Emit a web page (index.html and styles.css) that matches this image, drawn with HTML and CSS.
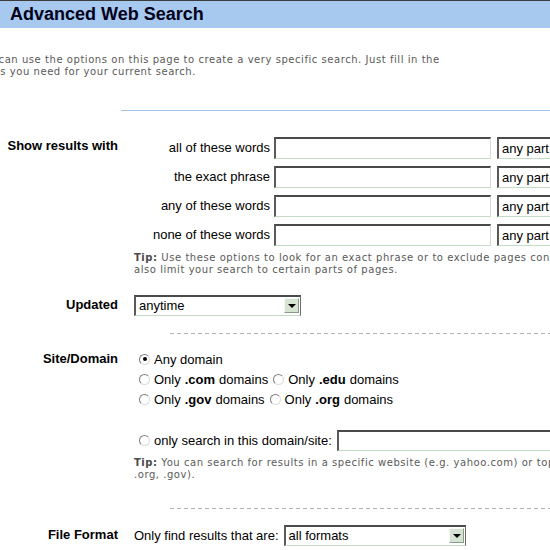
FILE: index.html
```html
<!DOCTYPE html>
<html>
<head>
<meta charset="utf-8">
<title>Advanced Web Search</title>
<link rel="stylesheet" href="styles.css">
</head>
<body>
<div class="page">
  <div class="header"><h1 class="title">Advanced Web Search</h1></div>
  <p class="intro">You can use the options on this page to create a very specific search. Just fill in the<br>fields you need for your current search.</p>
  <div class="rule-blue"></div>

  <div class="section words">
    <div class="label label-top">Show results with</div>
    <div class="content">
      <div class="word-grid">
        <div class="wlabel">all of these words</div><div class="field"></div><div class="select part"><span>any part</span></div>
        <div class="wlabel">the exact phrase</div><div class="field"></div><div class="select part"><span>any part</span></div>
        <div class="wlabel">any of these words</div><div class="field"></div><div class="select part"><span>any part</span></div>
        <div class="wlabel">none of these words</div><div class="field"></div><div class="select part"><span>any part</span></div>
      </div>
      <p class="tip"><b>Tip:</b> Use these options to look for an exact phrase or to exclude pages containing certain words. You can<br>also limit your search to certain parts of pages.</p>
    </div>
  </div>

  <div class="section updated">
    <div class="label">Updated</div>
    <div class="content">
      <div class="select dropdown w-updated"><span>anytime</span><i class="arrow"></i></div>
    </div>
  </div>

  <div class="dash"></div>

  <div class="section site">
    <div class="label label-radio">Site/Domain</div>
    <div class="content">
      <div class="radio-row"><span class="radio checked"></span>Any domain</div>
      <div class="radio-row"><span class="radio"></span>Only <b>.com</b> domains <span class="radio"></span>Only <b>.edu</b> domains</div>
      <div class="radio-row"><span class="radio"></span>Only <b>.gov</b> domains <span class="radio"></span>Only <b>.org</b> domains</div>
      <div class="radio-row domain-row"><span class="radio"></span>only search in this domain/site:<div class="field domain-field"></div></div>
      <p class="tip"><b>Tip:</b> You can search for results in a specific website (e.g. yahoo.com) or top-level domains (e.g. .com,<br>.org, .gov).</p>
    </div>
  </div>

  <div class="dash dash-2"></div>

  <div class="section format">
    <div class="label">File Format</div>
    <div class="content inline">
      <span class="prompt">Only find results that are:</span>
      <div class="select dropdown w-format"><span>all formats</span><i class="arrow"></i></div>
    </div>
  </div>
</div>
</body>
</html>
```

FILE: styles.css
```css
html, body {
  margin: 0;
  padding: 0;
  background: #ffffff;
  overflow: hidden;
}
.page {
  width: 550px;
  font-family: "Liberation Sans", Arial, sans-serif;
  font-size: 13px;
  color: #000;
}
.header {
  border-top: 1px solid #3c3c3c;
  background: #a8c9ef;
  height: 27px;
  padding-left: 10px;
}
.title {
  margin: 0;
  font-size: 18px;
  line-height: 27px;
  font-weight: bold;
  color: #00001a;
}
.intro {
  margin: 26px 0 0 -24px;
  font-family: "DejaVu Sans", Verdana, sans-serif;
  font-size: 10px;
  letter-spacing: 0.55px;
  line-height: 12px;
  color: #5a5a5a;
  white-space: nowrap;
}
.rule-blue {
  margin: 32px 0 0 121px;
  height: 1px;
  background: #a2c3ec;
}
.section {
  display: grid;
  grid-template-columns: 118px 1fr;
  column-gap: 16px;
}
.label {
  text-align: right;
  font-weight: bold;
  line-height: 20px;
  white-space: nowrap;
}
.label-top {
  line-height: 18px;
}
.words {
  margin-top: 26px;
}
.word-grid {
  display: grid;
  grid-template-columns: 136px 217px 100px;
  column-gap: 4px;
  row-gap: 7px;
}
.word-grid .select {
  margin-left: 2px;
}
.wlabel {
  text-align: right;
  line-height: 22px;
  white-space: nowrap;
}
.field {
  height: 22px;
  box-sizing: border-box;
  background: #fff;
  border-top: 2px solid #4a4a4a;
  border-left: 2px solid #5a5a5a;
  border-right: 1px solid #d0e0d0;
  border-bottom: 1px solid #c4dcc4;
}
.select {
  position: relative;
  box-sizing: border-box;
  height: 22px;
  background: #fff;
  border-top: 2px solid #4a4a4a;
  border-left: 2px solid #5a5a5a;
  border-right: 1px solid #6a6a6a;
  border-bottom: 1px solid #c4dcc4;
  line-height: 19px;
  padding-left: 3px;
  white-space: nowrap;
  overflow: hidden;
}
.dropdown {
  height: 21px;
  line-height: 18px;
  padding-left: 3px;
}
.w-updated {
  width: 167px;
}
.w-format {
  width: 182px;
}
.arrow {
  position: absolute;
  top: 1px;
  right: 1px;
  width: 15px;
  height: 15px;
  box-sizing: border-box;
  background: #d6e2d2;
  border-top: 1px solid #f4f8f2;
  border-left: 1px solid #f4f8f2;
  border-right: 1px solid #8a9a88;
  border-bottom: 1px solid #8a9a88;
}
.arrow::after {
  content: "";
  position: absolute;
  left: 3px;
  top: 5px;
  border-left: 4px solid transparent;
  border-right: 4px solid transparent;
  border-top: 4px solid #000;
}
.tip {
  margin: 6px 0 0 0;
  font-family: "DejaVu Sans", Verdana, sans-serif;
  font-size: 10px;
  letter-spacing: 0.55px;
  line-height: 12px;
  color: #5a5a5a;
  white-space: nowrap;
}
.tip b {
  color: #4a4a4a;
}
.updated {
  margin-top: 19px;
}
.updated .label {
  line-height: 19px;
}
.dash {
  margin: 17px 0 0 170px;
  height: 1px;
  background: repeating-linear-gradient(to right, #b4b4b4 0 4px, transparent 4px 7px);
}
.dash-2 {
  margin-top: 27px;
}
.site {
  margin-top: 15px;
}
.radio-row {
  display: flex;
  align-items: center;
  height: 20px;
  white-space: nowrap;
}
.radio-row b {
  margin: 0 4px;
}
.radio {
  display: inline-block;
  width: 11px;
  height: 11px;
  box-sizing: border-box;
  border-radius: 50%;
  border: 1px solid;
  border-color: #7c7c7c #dcdcdc #dcdcdc #7c7c7c;
  background: #fff;
  margin: 0 4px 0 5px;
  position: relative;
}
.radio.checked::after {
  content: "";
  position: absolute;
  left: 2.5px;
  top: 2.5px;
  width: 4px;
  height: 4px;
  border-radius: 50%;
  background: #000;
}
.domain-row {
  margin-top: 21px;
  height: 21px;
}
.domain-field {
  flex: 1;
  height: 21px;
  margin-left: 5px;
  margin-right: -20px;
}
.format {
  margin-top: 16px;
}
.content.inline {
  display: flex;
  align-items: center;
  white-space: nowrap;
}
.prompt {
  margin-right: 5px;
}
```
